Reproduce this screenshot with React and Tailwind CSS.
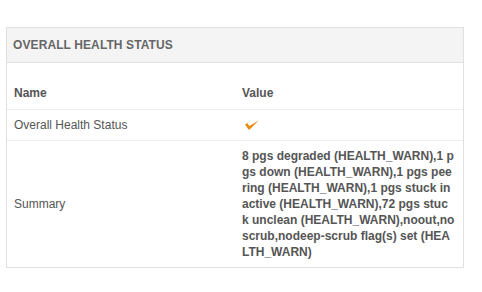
const lineasResumen = [
  '8 pgs degraded (HEALTH_WARN),1 p',
  'gs down (HEALTH_WARN),1 pgs pee',
  'ring (HEALTH_WARN),1 pgs stuck in',
  'active (HEALTH_WARN),72 pgs stuc',
  'k unclean (HEALTH_WARN),noout,no',
  'scrub,nodeep-scrub flag(s) set (HEA',
  'LTH_WARN)',
]

export default function App() {
  return (
    <div className="w-[482px] h-[292px] bg-white pt-[27px] pl-[6px] font-['Liberation_Sans',Arial,sans-serif] text-[12px] text-[#555]">
      <div className="w-[458px] border border-[#e0e0e0]">
        {/* Cabecera */}
        <div className="h-[35px] bg-[#f4f4f4] border-b border-[#e0e0e0] px-[6px] flex items-center">
          <span className="font-bold text-[12px] text-[#666] tracking-[0.1px]">OVERALL HEALTH STATUS</span>
        </div>

        {/* Tabla */}
        <table className="w-full table-fixed mt-[14px] border-collapse leading-[16px]">
          <colgroup>
            <col className="w-[228px]" />
            <col />
          </colgroup>
          <thead>
            <tr className="border-b border-[#eeeeee]">
              <th className="text-left font-bold py-[8px] pl-[7px]">Name</th>
              <th className="text-left font-bold py-[8px] pl-[7px]">Value</th>
            </tr>
          </thead>
          <tbody>
            <tr className="border-b border-[#eeeeee]">
              <td className="py-[7px] pl-[7px]">Overall Health Status</td>
              <td className="py-[7px] pl-[10px]">
                <svg width="14" height="10" viewBox="0 0 14 10" className="block">
                  <path d="M0 4.2 L2.6 3.2 L4.3 6 L13.6 0.4 L4.6 9.6 L3.4 9.6 Z" fill="#ea8a0c" />
                </svg>
              </td>
            </tr>
            <tr>
              <td className="py-[7px] pl-[7px] align-middle">Summary</td>
              <td className="py-[7px] pl-[7px] pr-[6px] font-bold">
                {lineasResumen.map((l) => (
                  <span key={l} className="block whitespace-nowrap">{l}</span>
                ))}
              </td>
            </tr>
          </tbody>
        </table>
      </div>
    </div>
  )
}
